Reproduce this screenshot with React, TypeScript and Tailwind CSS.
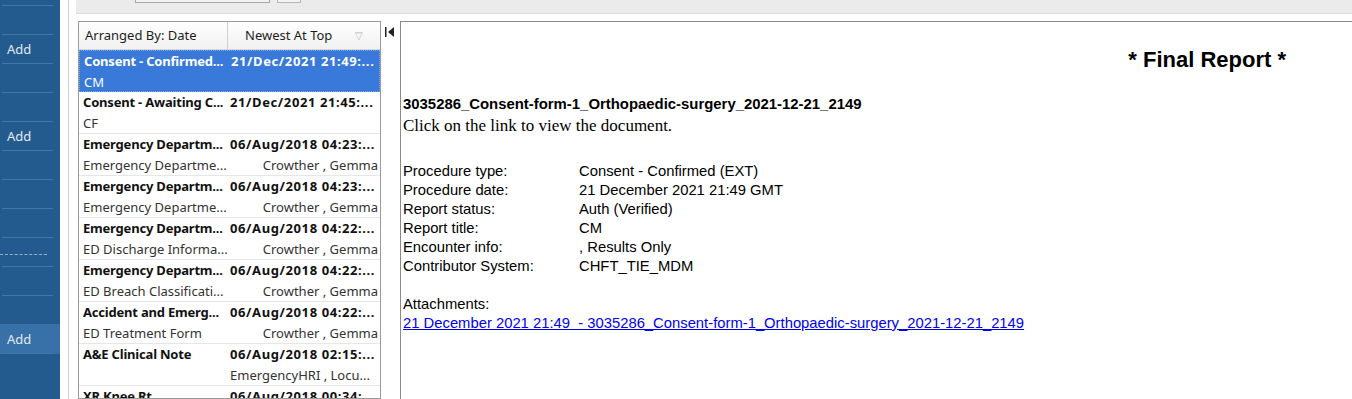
import React from "react";

type Entry = { title: string; date: string; sub: string; author: string; selected?: boolean };

const entries: Entry[] = [
  { title: "Consent - Confirmed...", date: "21/Dec/2021 21:49:...", sub: "CM", author: "", selected: true },
  { title: "Consent - Awaiting C...", date: "21/Dec/2021 21:45:...", sub: "CF", author: "" },
  { title: "Emergency Departm...", date: "06/Aug/2018 04:23:...", sub: "Emergency Departme...", author: "Crowther , Gemma" },
  { title: "Emergency Departm...", date: "06/Aug/2018 04:23:...", sub: "Emergency Departme...", author: "Crowther , Gemma" },
  { title: "Emergency Departm...", date: "06/Aug/2018 04:22:...", sub: "ED Discharge Informa...", author: "Crowther , Gemma" },
  { title: "Emergency Departm...", date: "06/Aug/2018 04:22:...", sub: "ED Breach Classificati...", author: "Crowther , Gemma" },
  { title: "Accident and Emerg...", date: "06/Aug/2018 04:22:...", sub: "ED Treatment Form", author: "Crowther , Gemma" },
  { title: "A&E Clinical Note", date: "06/Aug/2018 02:15:...", sub: "", author: "EmergencyHRI , Locu..." },
  { title: "XR Knee Rt", date: "06/Aug/2018 00:34:...", sub: "", author: "" },
];

// sidebar rows, 29px each
const sideRows: { label?: string; active?: boolean; dashed?: boolean }[] = [
  {},
  { label: "Add" },
  {},
  {},
  { label: "Add" },
  {},
  {},
  {},
  { dashed: true },
  {},
  {},
  { label: "Add", active: true },
  {},
];

const Sidebar = () => (
  <div className="w-[60px] shrink-0 bg-[#245b8f] flex flex-col pt-[5px]">
    {sideRows.map((r, i) => (
      <div key={i} className="relative h-[29px] shrink-0">
        <div className="h-px w-[51px] ml-[2px] bg-[#3d77ab]" />
        <div
          className={
            "h-[28px] flex items-center pl-[7px] pt-[2px] text-[13px] text-[#e2eaf2] " +
            (r.active ? "bg-[#3771a8] -mt-px h-[30px]" : "")
          }
          style={{ fontFamily: '"Noto Sans", sans-serif' }}
        >
          {r.label}
          {r.dashed && <div className="mt-[2px] w-[47px] -ml-[7px] border-t border-dashed border-[#8fb0cf]" />}
        </div>
      </div>
    ))}
  </div>
);

const ListPanel = () => (
  <div
    className="w-[303px] shrink-0 border border-[#9a9a9a] bg-white flex flex-col overflow-hidden"
    style={{ fontFamily: '"Noto Sans", sans-serif' }}
  >
    <div className="h-[28px] shrink-0 flex items-center bg-gradient-to-b from-white to-[#f1f1f1] border-b border-[#d5d5d5] text-[13px] text-[#1e1e1e]">
      <div className="w-[149px] pl-[6px] h-full flex items-center border-r border-[#cfcfcf]">Arranged By: Date</div>
      <div className="flex-1 pl-[17px] flex items-center">
        Newest At Top
        <span className="ml-auto mr-[17px] text-[10px] text-[#b4b4b4]">▽</span>
      </div>
    </div>
    {entries.map((e, i) => (
      <div
        key={i}
        className={
          "h-[42px] shrink-0 text-[13px] leading-[21px] border-b " +
          (e.selected
            ? "bg-[#3879d9] text-white border border-dotted border-[#7aa4e2]"
            : "text-[#111] border-[#e6e6e6]")
        }
      >
        <div className="flex font-bold whitespace-nowrap">
          <div className="w-[151px] pl-[4px] overflow-hidden tracking-[-0.2px]">{e.title}</div>
          <div className="flex-1 overflow-hidden tracking-[0.6px]">{e.date}</div>
        </div>
        <div className={"flex whitespace-nowrap " + (e.selected ? "text-white" : "text-[#333]")}>
          <div className="w-[151px] pl-[4px] overflow-hidden">{e.sub}</div>
          <div className={"flex-1 overflow-hidden pr-[2px] " + (e.author.startsWith("Emergency") ? "" : "text-right")}>
            {e.author}
          </div>
        </div>
      </div>
    ))}
  </div>
);

const fields: [string, string][] = [
  ["Procedure type:", "Consent - Confirmed (EXT)"],
  ["Procedure date:", "21 December 2021 21:49 GMT"],
  ["Report status:", "Auth (Verified)"],
  ["Report title:", "CM"],
  ["Encounter info:", ", Results Only"],
  ["Contributor System:", "CHFT_TIE_MDM"],
];

const ReportPanel = () => (
  <div
    className="flex-1 border-l border-t border-[#8a8a8a] bg-white pl-[2px] text-black"
    style={{ fontFamily: '"Liberation Sans", Arial, sans-serif' }}
  >
    <div className="flex justify-end pr-[66px] mt-[25px] text-[22px] font-bold leading-[25px]">* Final Report *</div>
    <div className="mt-[24px] text-[14.9px] font-bold leading-[17px]">
      3035286_Consent-form-1_Orthopaedic-surgery_2021-12-21_2149
    </div>
    <div className="text-[17px] leading-[20px] mt-[3px]" style={{ fontFamily: '"Liberation Serif", serif' }}>
      Click on the link to view the document.
    </div>
    <div className="mt-[26px] text-[14.8px] leading-[19px]">
      {fields.map(([k, v]) => (
        <div key={k} className="flex">
          <div className="w-[176px]">{k}</div>
          <div>{v}</div>
        </div>
      ))}
    </div>
    <div className="mt-[19px] text-[14.8px] leading-[19px]">Attachments:</div>
    <a className="block text-[14.8px] leading-[19px] text-[#0000ee] underline whitespace-pre">
      21 December 2021 21:49  - 3035286_Consent-form-1_Orthopaedic-surgery_2021-12-21_2149
    </a>
  </div>
);

export default function App() {
  return (
    <div className="w-[1352px] h-[399px] overflow-hidden flex bg-white">
      <Sidebar />
      <div className="w-[8px] shrink-0 bg-white" />
      <div className="w-px shrink-0 bg-[#cfcfcf]" />
      <div className="flex-1 flex flex-col bg-white min-w-0">
        <div className="h-[14px] shrink-0 bg-[#ebebeb] border-b border-[#dcdcdc] flex items-start ml-[7px]">
          <div className="ml-[59px] w-[135px] h-[3px] border-x border-b border-[#a8a8a8] bg-[#f2f2f2]" />
          <div className="ml-[7px] w-[24px] h-[3px] border-x border-b border-[#b8b8b8] bg-[#f2f2f2]" />
        </div>
        <div className="flex flex-1 pt-[7px] pl-[9px] min-h-0">
          <ListPanel />
          <div className="w-[19px] shrink-0 flex justify-center pt-[6px]">
            <svg width="10" height="10" viewBox="0 0 10 10" className="ml-[-2px]">
              <rect x="0" y="0" width="1.5" height="10" fill="#222" />
              <path d="M9 0 L9 10 L3 5 Z" fill="#222" />
            </svg>
          </div>
          <ReportPanel />
        </div>
      </div>
    </div>
  );
}
